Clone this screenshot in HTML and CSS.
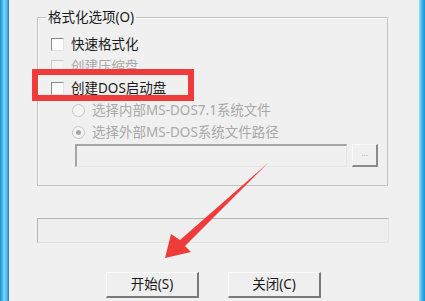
FILE: index.html
```html
<!DOCTYPE html>
<html lang="zh">
<head>
<meta charset="utf-8">
<link rel="stylesheet" href="styles.css">
</head>
<body>
  <div class="frame frame-left"></div>
  <div class="main">
    <fieldset class="group">
      <legend class="legend">格式化选项(O)</legend>
      <div class="row">
        <span class="check"></span><span class="label">快速格式化</span>
      </div>
      <div class="row disabled">
        <span class="check"></span><span class="label">创建压缩盘</span>
      </div>
      <div class="row">
        <span class="check"></span><span class="label">创建DOS启动盘</span>
      </div>
      <div class="row sub disabled">
        <span class="radio"></span><span class="label">选择内部MS-DOS7.1系统文件</span>
      </div>
      <div class="row sub disabled">
        <span class="radio on"></span><span class="label">选择外部MS-DOS系统文件路径</span>
      </div>
      <div class="path-row">
        <div class="path-input"></div>
        <div class="browse">...</div>
      </div>
    </fieldset>
    <div class="progress"></div>
    <div class="buttons">
      <div class="btn">开始(S)</div>
      <div class="btn">关闭(C)</div>
    </div>
  </div>
  <div class="frame frame-right"></div>

  <div class="highlight"></div>
  <svg class="arrow" width="425" height="301" viewBox="0 0 425 301">
    <polygon points="165,258 171,234 180,240 268,163 185,246 191,252" fill="#f03b3b"/>
  </svg>
</body>
</html>
```

FILE: styles.css
```css
html, body {
  margin: 0;
  padding: 0;
}
body {
  width: 425px;
  height: 301px;
  overflow: hidden;
  position: relative;
  display: flex;
  background: #f0f0f0;
  font-family: "Noto Sans", "Noto Sans CJK SC", sans-serif;
  font-size: 13.5px;
  color: #1a1a1a;
}
.frame-left {
  width: 9px;
  flex: none;
  background: linear-gradient(to right, #1c8fcf 0, #36aee6 2px, #7fd6f6 4px, #5cc6f0 6px, #2ba0dc 8px, #50606a 9px);
}
.frame-right {
  width: 6px;
  flex: none;
  background: linear-gradient(to right, #9fdcf4 0, #5cc6f0 2px, #2ea6e2 4px, #1f93d3 6px);
}
.main {
  flex: 1;
  padding-left: 28px;
}
.group {
  margin: 10px 0 0 0;
  padding: 9px 0 18px 0;
  width: 351px;
  box-sizing: border-box;
  border: 1px solid #c3c3c3;
  box-shadow: inset 1px 1px 0 #fbfbfb;
  min-width: 0;
}
.legend {
  margin-left: 8px;
  padding: 0 2px;
  line-height: 14px;
  color: #1a1a1a;
}
.row {
  height: 22px;
  display: flex;
  align-items: center;
  padding-left: 13px;
  line-height: 14px;
  white-space: nowrap;
}
.row.sub {
  padding-left: 34px;
}
.row.disabled .label {
  color: #a9a9a9;
}
.check {
  width: 13px;
  height: 13px;
  box-sizing: border-box;
  border: 1px solid #8a8a8a;
  border-right-color: #e4e4e4;
  border-bottom-color: #e4e4e4;
  background: #fdfdfd;
  margin-right: 7px;
  flex: none;
}
.row.disabled .check {
  border-color: #c8c8c8 #f0f0f0 #f0f0f0 #c8c8c8;
  background: #f4f4f4;
}
.radio {
  width: 13px;
  height: 13px;
  box-sizing: border-box;
  border-radius: 50%;
  border: 1px solid #c6c6c6;
  background: #f4f4f4;
  margin-right: 7px;
  flex: none;
  position: relative;
}
.radio.on::after {
  content: "";
  position: absolute;
  left: 3px;
  top: 3px;
  width: 5px;
  height: 5px;
  border-radius: 50%;
  background: #a8a8a8;
}
.path-row {
  display: flex;
  margin-top: 1px;
  padding-left: 37px;
  height: 23px;
}
.path-input {
  width: 272px;
  box-sizing: border-box;
  border: 1px solid #e6e6e6;
  border-top: 2px solid #a5a5a5;
  border-left: 2px solid #a5a5a5;
  background: #f0f0f0;
}
.browse {
  margin-left: 5px;
  width: 26px;
  box-sizing: border-box;
  border: 1px solid #fafafa;
  border-right: 2px solid #8a8a8a;
  border-bottom: 2px solid #8a8a8a;
  color: #b0b0b0;
  font-size: 9px;
  line-height: 16px;
  text-align: center;
}
.progress {
  margin-top: 32px;
  width: 352px;
  height: 25px;
  box-sizing: border-box;
  border: 1px solid #e4e4e4;
  border-top-color: #b4b4b4;
  border-left-color: #b4b4b4;
  background: #eeeeee;
}
.buttons {
  display: flex;
  gap: 29px;
  margin-top: 29px;
  padding-left: 69px;
}
.btn {
  width: 93px;
  height: 26px;
  box-sizing: border-box;
  border: 1px solid #fcfcfc;
  border-right: 2px solid #7a7a7a;
  border-bottom: 2px solid #7a7a7a;
  background: #efefef;
  text-align: center;
  line-height: 23px;
  color: #1a1a1a;
}
.highlight {
  position: absolute;
  left: 32px;
  top: 69px;
  width: 162px;
  height: 32px;
  box-sizing: border-box;
  border: 6px solid #f03b3b;
}
.arrow {
  position: absolute;
  left: 0;
  top: 0;
}
```
